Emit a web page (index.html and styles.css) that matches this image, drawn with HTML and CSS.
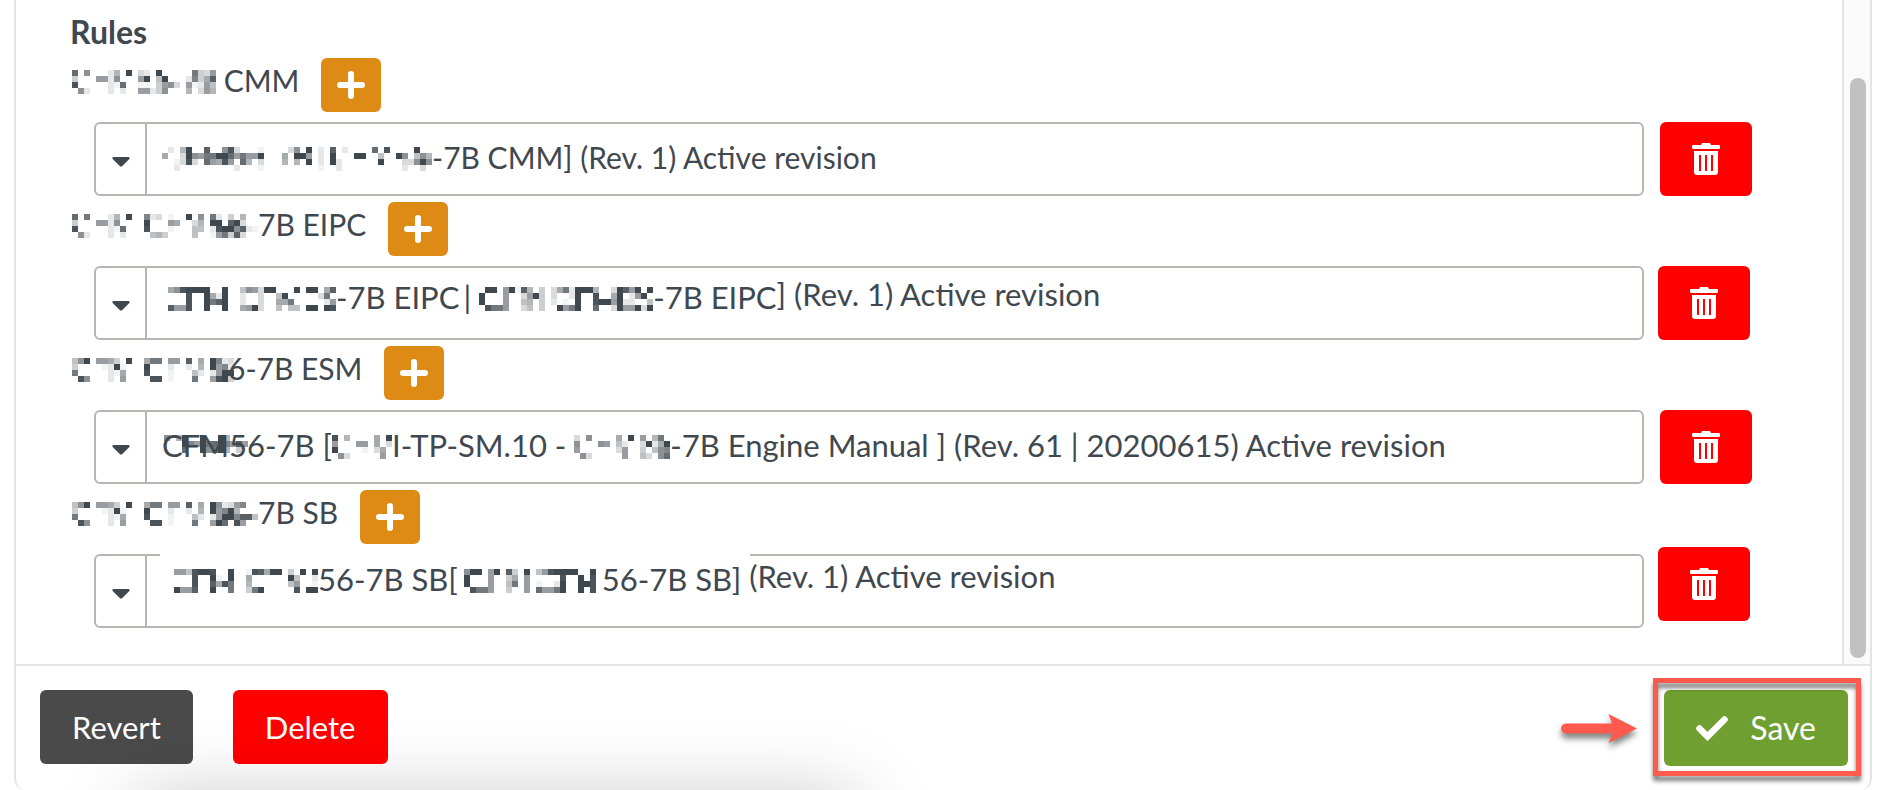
FILE: index.html
```html
<!DOCTYPE html>
<html lang="en">
<head>
<meta charset="utf-8">
<title>Rules</title>
<link rel="stylesheet" href="styles.css">
</head>
<body>
<svg class="defs" aria-hidden="true">
  <symbol id="plus" viewBox="0 0 28 28"><path d="M14 3v22M3 14h22" fill="none" stroke="#fff" stroke-width="6" stroke-linecap="round"/></symbol>
  <symbol id="caret" viewBox="0 0 18 10"><path d="M1.500 0h15q2 .5.8 2l-7 7q-1.300 1.200-2.600 0l-7-7q-1.200-1.500.8-2z" fill="#3f484f"/></symbol>
  <symbol id="trash" viewBox="0 0 28 32"><path fill="#fff" fill-rule="evenodd" d="M9 2l1-2h8l1 2h8q1 0 1 1v2q0 1-1 1H1q-1 0-1-1V3q0-1 1-1zM2 8h24v21q0 3-3 3H5q-3 0-3-3zM7 12v16h2V12zM13 12v16h2V12zM19 12v16h2V12z"/></symbol>
  <symbol id="check" viewBox="0 0 32 25"><path d="M3.500 12.500l8 8L28.500 3.500" fill="none" stroke="#fff" stroke-width="6.500" stroke-linejoin="miter" stroke-linecap="round"/></symbol>
</svg>
<main class="panel">
  <div class="body">
    <section class="rules">
      <h2 class="title">Rules</h2>

      <div class="rule">
        <div class="head">
          <span class="name"><span class="mosaic" data-rows="c.9...26.f.32.f.....b438|4...8829...8f.5f...2a47d|e.....21c..11.4893.81285|.92...2.2..88249...6.386"></span> CMM</span>
          <button class="add" aria-label="Add CMM"><svg class="i-plus"><use href="#plus"/></svg></button>
        </div>
        <div class="line">
          <div class="field">
            <button class="toggle" aria-label="Choose revision"><svg class="i-caret"><use href="#caret"/></svg></button>
            <div class="value"><span class="mosaic" data-rows=".2.6f..d..9e3...1....39.f.2.d.2....c.e....f..|7..3f98bbffc8b88f...7.ff8.2.f...ff..5..f9.596|..13e3.c87e8.c6.3...6.6.f.2.f2......f...339f9|..2.........2...1.........1..2..........2..3."></span><span class="text">-7B CMM] (Rev. 1) Active revision</span></div>
          </div>
          <button class="trash" aria-label="Remove"><svg class="i-trash"><use href="#trash"/></svg></button>
        </div>
      </div>

      <div class="rule patched">
        <div class="head">
          <span class="name"><span class="mosaic" data-rows="c.b...26.f..a23.1..f.9.b2.4.6..|4...8829....f...87..36.ff.df3..|e.....21c...e...1...55.2eff9d21|.92...2.2....564....5..18b4d3.."></span>7B EIPC</span>
          <button class="add" aria-label="Add EIPC"><svg class="i-plus"><use href="#plus"/></svg></button>
        </div>
        <div class="line">
          <div class="field">
            <button class="toggle" aria-label="Choose revision"><svg class="i-caret"><use href="#caret"/></svg></button>
            <div class="value high"><span class="mosaic" data-rows="79effff..f..5983ff...f.ff.7d|...e..f72f..2..3..5f.....3b.|...e..fbdf..2..3..77b.....28|d88e..f..f..78f3..5.55.ff.fe"></span><span class="text">-7B EIPC</span><span class="text bar">|</span><span class="mosaic" data-rows=".ff.8f1d6.4.37b2fff6..3fd8f.f|f...8..38f4.3..2f..e..7f.28f.|f...8..56.4.2.1.f..eff8f22..5|.ebb8..35.4..f8bf..c..3f88f3f"></span><span class="text">-7B EIPC</span><span class="suffix">] (Rev. 1) Active revision</span></div>
          </div>
          <button class="trash" aria-label="Remove"><svg class="i-trash"><use href="#trash"/></svg></button>
        </div>
      </div>

      <div class="rule">
        <div class="head">
          <span class="name"><span class="mosaic tucked" data-rows="59f.8874.f..7bb.88.d.7.fa23|4....12f1...f...2..2.6.f8a2|b.....217...e...1...52.28ff|.e9...2.8....ee.1...b..8ef4"></span>6-7B ESM</span>
          <button class="add" aria-label="Add ESM"><svg class="i-plus"><use href="#plus"/></svg></button>
        </div>
        <div class="line">
          <div class="field">
            <button class="toggle" aria-label="Choose revision"><svg class="i-caret"><use href="#caret"/></svg></button>
            <div class="value long"><span class="text covered">CFM56-7B [<span class="mosaic cover" data-rows="9.6f..f..f6...|...fa8fbcfa8d8|...c..f9bf6.4."></span></span><span class="mosaic" data-rows="e.6....7.f|8...88.7.3|f....1.37.|.93.....8."></span><span class="text">I-TP-SM.10 - </span><span class="mosaic" data-rows="3.9....7.f.8.6b.|9...98.52..3f27f|8......38..4.59a|.93.....8..53.9c"></span><span class="text">-7B Engine Manual ] (Rev. 61 | 20200615) Active revision</span></div>
          </div>
          <button class="trash" aria-label="Remove"><svg class="i-trash"><use href="#trash"/></svg></button>
        </div>
      </div>

      <div class="rule patched">
        <div class="head">
          <span class="name"><span class="mosaic" data-rows="59f.8874.f..7bb.88.d.7.f9238a..|4....12f1...f...2..2.6.f8af6...|b.....217...e...1...52.28ffadd5|.e9...2.8....ee.1...b..8fc.e8.."></span>7B SB</span>
          <button class="add" aria-label="Add SB"><svg class="i-plus"><use href="#plus"/></svg></button>
        </div>
        <div class="line lifted">
          <div class="field">
            <button class="toggle" aria-label="Choose revision"><svg class="i-caret"><use href="#caret"/></svg></button>
            <div class="value top"><span class="mosaic" data-rows="885effe..f..1ed7ff.4.f.f|...e..f1.f..7......f5..2|...e..d7eb..6......58..1|f88d..f..b..4bf.....e.ff"></span><span class="text">56-7B SB</span><span class="text bracket">[</span><span class="mosaic" data-rows="9ff.8f.d4.f.58effff..f.|f...8..47.8.....e..f.e.|f...8..5b.8.1..2f..ffe.|.ebb8..4..8.c88bf..f.e."></span><span class="text">56-7B SB]</span><span class="suffix"> (Rev. 1) Active revision</span></div>
          </div>
          <button class="trash" aria-label="Remove"><svg class="i-trash"><use href="#trash"/></svg></button>
        </div>
      </div>
    </section>
    <div class="track"><div class="thumb"></div></div>
  </div>
  <footer class="footer">
    <div class="shade"></div>
    <button class="btn dark">Revert</button>
    <button class="btn red">Delete</button>
    <svg class="arrow" viewBox="0 0 78 30" aria-hidden="true"><path d="M6 9.500h46L48.500 0 77 14.500 48.500 29 53 19.500H6a5 5 0 0 1 0-10z" fill="#ff5a4d"/></svg>
    <div class="callout"><button class="btn green"><svg class="i-check"><use href="#check"/></svg>Save</button></div>
  </footer>
</main>
<script src="mosaic.js"></script>
</body>
</html>
```
FILE: styles.css
```css
* { box-sizing: border-box; }

body {
  margin: 0;
  background: #fff;
  color: #3f484f;
  font: 30px/38px Lato, "Open Sans", sans-serif;
}

button {
  border: 0;
  padding: 0;
  font: inherit;
  display: flex;
  align-items: center;
  justify-content: center;
}

.defs { position: absolute; width: 0; height: 0; }

.panel {
  display: flex;
  flex-direction: column;
  min-height: 100vh;
  margin: 0 6px 0 14px;
  border: 2px solid #e4e4e4;
  border-width: 0 2px;
  border-radius: 0 0 12px 12px;
  overflow: hidden;
}

.body { flex: 1; display: flex; }

.rules { flex: 1; padding: 13px 90px 0 54px; }

.title { margin: 0 0 7px; font-size: 32px; line-height: 38px; font-weight: 700; }

.rule { padding-bottom: 6px; }

.head { display: flex; gap: 22px; height: 54px; padding-left: 2px; }

.name { white-space: pre; line-height: 44px; }

.add { width: 60px; height: 54px; border-radius: 6px; background: #dd8b14; }

.line { display: flex; gap: 16px; margin: 10px 0 0 24px; }

.patched .line { gap: 14px; padding-right: 2px; }

.field {
  flex: 1;
  display: flex;
  height: 74px;
  border: 2px solid #b9b5b0;
  border-radius: 6px;
}

.toggle { width: 51px; padding-top: 5px; border-right: 2px solid #b9b5b0; background: none; }

.value {
  flex: 1;
  display: flex;
  align-items: center;
  padding-left: 15px;
  white-space: pre;
}

.high, .top, .long { font-size: 31px; }

.high { padding: 0 0 8px 21px; }

.top { padding: 0 0 20px 27px; }

.text { padding-bottom: 4px; }

.suffix { padding-bottom: 10px; }

.bar { padding-left: 4px; padding-right: 8px; }

.bracket { padding-right: 6px; }

.lifted .field { position: relative; }

/* blank strip over the top border */
.lifted .field::before {
  content: "";
  position: absolute;
  left: 64px;
  top: -2px;
  width: 590px;
  height: 2px;
  background: #fff;
}

.trash { width: 92px; height: 74px; border-radius: 6px; background: #f00; }

.lifted .trash { margin-top: -7px; }

.mosaic { display: inline-block; height: 24px; vertical-align: -2px; }

.mosaic svg { display: block; }

.tucked { margin-right: -6px; }

.covered { position: relative; }

.cover { position: absolute; left: 2px; top: 9px; }

.track {
  width: 28px;
  padding: 78px 4px 6px 6px;
  border-left: 2px solid #e4e4e4;
  background: #fafafa;
}

.thumb { height: 100%; border-radius: 8px; background: #c1c1c1; }

.footer {
  position: relative;
  display: flex;
  align-items: flex-start;
  gap: 40px;
  height: 126px;
  padding: 24px 22px 0 24px;
  border-top: 2px solid #e4e4e4;
  overflow: hidden;
}

/* soft shade rising from the bottom edge */
.shade {
  position: absolute;
  left: 120px;
  top: 134px;
  width: 720px;
  height: 100px;
  box-shadow: 0 0 80px rgba(0, 0, 0, .24);
}

.btn { height: 74px; padding: 0 32px; border-radius: 6px; color: #fff; font-size: 31px; }

.dark { background: #4a4a4a; }

.red { background: #f00; }

.green { gap: 22px; height: 76px; background: #6e9f30; font-size: 32px; }

.arrow {
  width: 78px;
  height: 30px;
  margin: 24px -14px 0 auto;
  filter: drop-shadow(0 5px 3px rgba(0, 0, 0, .5));
}

.callout { position: relative; }

.callout::before {
  content: "";
  position: absolute;
  inset: -12px -13px -10px -11px;
  border: 5px solid #ff5a4d;
  filter: drop-shadow(0 5px 2px rgba(0, 0, 0, .5));
  pointer-events: none;
}

.i-plus { width: 28px; height: 28px; }
.i-caret { width: 18px; height: 10px; }
.i-trash { width: 28px; height: 32px; }
.i-check { width: 32px; height: 25px; }
```
FILE: mosaic.js
```js
// Draws masked text as a grid of 6px cells; each hex digit is a cell's darkness.
const NS = "http://www.w3.org/2000/svg";
document.querySelectorAll(".mosaic").forEach((host) => {
  const rows = host.dataset.rows.split("|");
  const svg = document.createElementNS(NS, "svg");
  svg.setAttribute("width", rows[0].length * 6);
  svg.setAttribute("height", rows.length * 6);
  rows.forEach((row, y) => {
    [...row].forEach((cell, x) => {
      if (cell === ".") return;
      const rect = document.createElementNS(NS, "rect");
      rect.setAttribute("x", x * 6);
      rect.setAttribute("y", y * 6);
      rect.setAttribute("width", 6);
      rect.setAttribute("height", 6);
      rect.setAttribute("fill", "#3f484f");
      rect.setAttribute("fill-opacity", parseInt(cell, 16) / 15);
      svg.append(rect);
    });
  });
  host.append(svg);
});
```
